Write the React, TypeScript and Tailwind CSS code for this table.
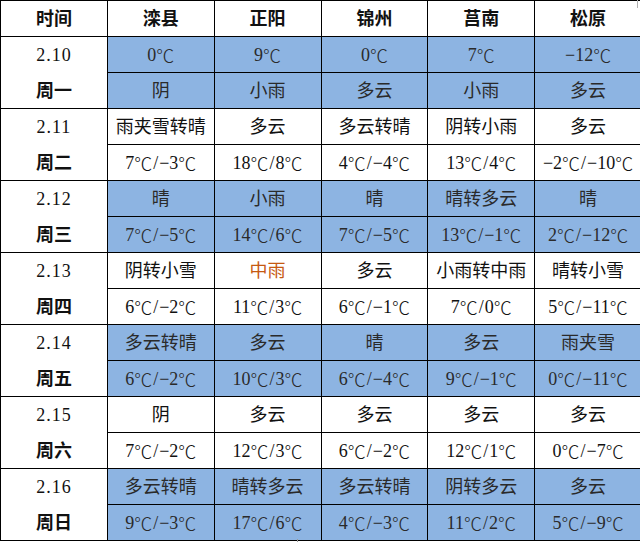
import React from "react";

type Day = {
  date: string;
  week: string;
  top: string[];
  bottom: string[];
  blue: boolean;
};

const cities = ["滦县", "正阳", "锦州", "莒南", "松原"];

const days: Day[] = [
  {
    date: "2.10",
    week: "周一",
    top: ["0℃", "9℃", "0℃", "7℃", "-12℃"],
    bottom: ["阴", "小雨", "多云", "小雨", "多云"],
    blue: true,
  },
  {
    date: "2.11",
    week: "周二",
    top: ["雨夹雪转晴", "多云", "多云转晴", "阴转小雨", "多云"],
    bottom: ["7℃/-3℃", "18℃/8℃", "4℃/-4℃", "13℃/4℃", "-2℃/-10℃"],
    blue: false,
  },
  {
    date: "2.12",
    week: "周三",
    top: ["晴", "小雨", "晴", "晴转多云", "晴"],
    bottom: ["7℃/-5℃", "14℃/6℃", "7℃/-5℃", "13℃/-1℃", "2℃/-12℃"],
    blue: true,
  },
  {
    date: "2.13",
    week: "周四",
    top: ["阴转小雪", "中雨", "多云", "小雨转中雨", "晴转小雪"],
    bottom: ["6℃/-2℃", "11℃/3℃", "6℃/-1℃", "7℃/0℃", "5℃/-11℃"],
    blue: false,
  },
  {
    date: "2.14",
    week: "周五",
    top: ["多云转晴", "多云", "晴", "多云", "雨夹雪"],
    bottom: ["6℃/-2℃", "10℃/3℃", "6℃/-4℃", "9℃/-1℃", "0℃/-11℃"],
    blue: true,
  },
  {
    date: "2.15",
    week: "周六",
    top: ["阴", "多云", "多云", "多云", "多云"],
    bottom: ["7℃/-2℃", "12℃/3℃", "6℃/-2℃", "12℃/1℃", "0℃/-7℃"],
    blue: false,
  },
  {
    date: "2.16",
    week: "周日",
    top: ["多云转晴", "晴转多云", "多云转晴", "阴转多云", "多云"],
    bottom: ["9℃/-3℃", "17℃/6℃", "4℃/-3℃", "11℃/2℃", "5℃/-9℃"],
    blue: true,
  },
];

// ℃ in the CJK face so it is full width, like the source sheet
function renderText(text: string) {
  const parts = text.split(/(℃|\/|-)/).filter((p) => p !== "");
  return parts.map((p, i) => {
    if (p === "℃")
      return (
        <span key={i} className="font-['Noto_Sans_CJK_SC'] font-light">
          ℃
        </span>
      );
    if (p === "/") return <span key={i} className="px-[1px]">/</span>;
    if (p === "-") return <span key={i}>−</span>;
    return <span key={i}>{p}</span>;
  });
}

function Cell({ text, blue }: { text: string; blue: boolean }) {
  const orange = text === "中雨";
  return (
    <div
      className={`flex items-center justify-center whitespace-nowrap ${
        blue ? "bg-[#8db4e2] text-[#2a2a2a]" : "bg-white text-[#111]"
      } ${orange ? "text-[#c65911]" : ""}`}
    >
      {renderText(text)}
    </div>
  );
}

export default function App() {
  return (
    <div
      className="relative h-[542px] w-[640px] overflow-hidden bg-white text-[18px] leading-none"
      style={{ fontFamily: '"Liberation Serif", "Noto Sans CJK SC", serif' }}
    >
      <div className="grid w-[642px] grid-cols-6 grid-rows-[repeat(15,35px)] gap-px bg-black p-px">
        <div className="flex items-center justify-center bg-white font-bold text-[#111]">时间</div>
        {cities.map((c) => (
          <div key={c} className="flex items-center justify-center bg-white font-bold text-[#111]">
            {c}
          </div>
        ))}

        {days.map((d) => (
          <React.Fragment key={d.date}>
            <div className="col-start-1 row-span-2 flex flex-col bg-white text-[#111]">
              <div className="flex h-[36px] items-center justify-center tracking-[1px]">{d.date}</div>
              <div className="flex h-[35px] items-center justify-center font-bold">{d.week}</div>
            </div>
            {d.top.map((t, i) => (
              <Cell key={`t${i}`} text={t} blue={d.blue} />
            ))}
            {d.bottom.map((t, i) => (
              <Cell key={`b${i}`} text={t} blue={d.blue} />
            ))}
          </React.Fragment>
        ))}
      </div>
      <div className="absolute left-[297px] top-[539px] h-[3px] w-px bg-[#9a9a9a]" />
      <div className="absolute right-[2px] top-0 h-[8px] w-px bg-[#b0b0b0]" />
    </div>
  );
}
